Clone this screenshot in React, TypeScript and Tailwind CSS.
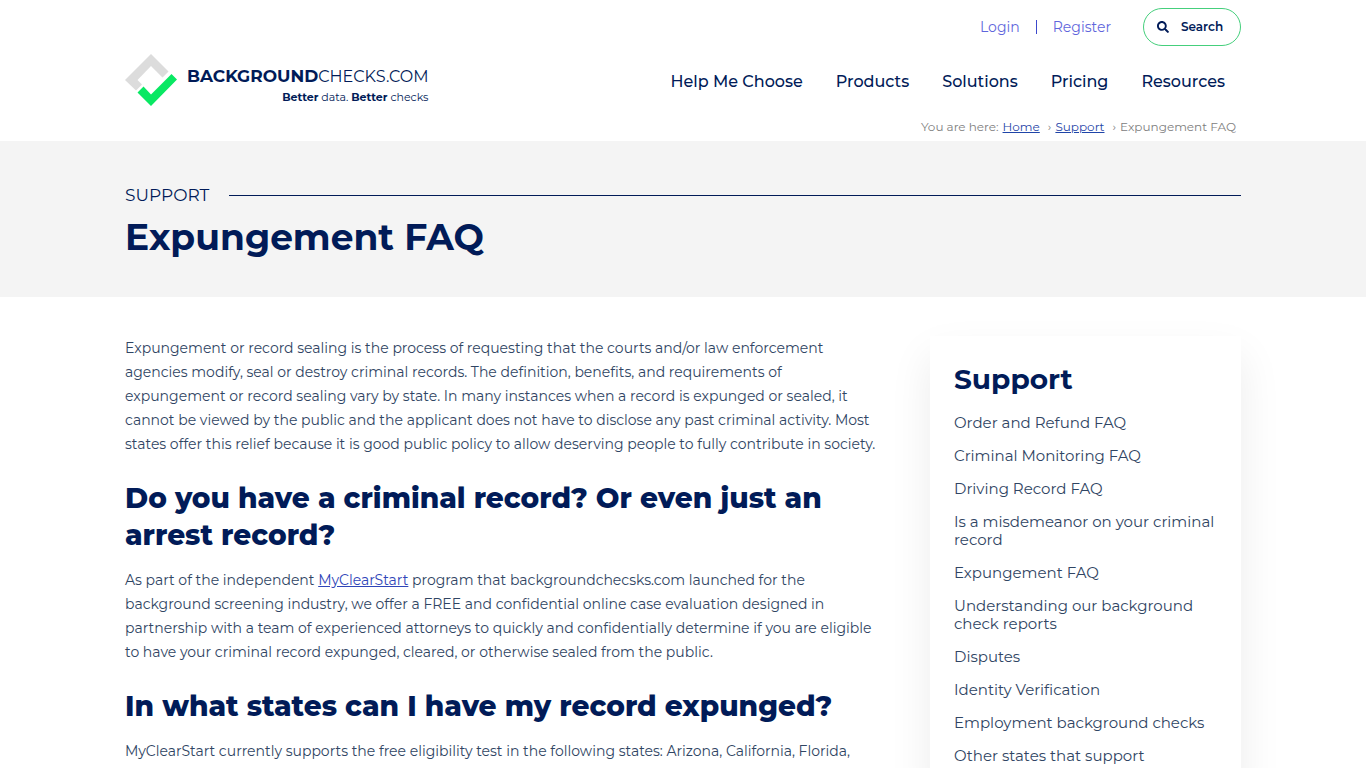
import React from "react";
import { FaSearch } from "react-icons/fa";

const nav = ["Help Me Choose", "Products", "Solutions", "Pricing", "Resources"];

const supportLinks = [
  "Order and Refund FAQ",
  "Criminal Monitoring FAQ",
  "Driving Record FAQ",
  "Is a misdemeanor on your criminal record",
  "Expungement FAQ",
  "Understanding our background check reports",
  "Disputes",
  "Identity Verification",
  "Employment background checks",
  "Other states that support",
];

function Logo() {
  return (
    <a href="#" className="flex items-center gap-2.5 text-[#011b58]" aria-label="BackgroundChecks.com home">
      <svg viewBox="0 0 52 52" className="h-[52px] w-[52px]" aria-hidden="true">
        <path d="M26 0 43.5 17.5 37.5 23.5 26 12 12.5 26 17 30.5 11 36.5 0 26Z" fill="#dcdcdc" />
        <path d="M46.5 20 52 25.5 26 52 12.5 38.5 18.5 32.5 26 40.5Z" fill="#09e863" />
      </svg>
      <span className="flex flex-col items-end pt-2.5">
        <span className="text-[17px] leading-[19px]">
          <b className="font-bold">BACKGROUND</b><span className="text-base">CHECKS.COM</span>
        </span>
        <span className="text-[11px] leading-4">
          <b className="font-bold">Better</b> data. <b className="font-bold">Better</b> checks
        </span>
      </span>
    </a>
  );
}

function Header() {
  return (
    <header className="mx-auto flex w-full max-w-[1116px] items-start justify-between">
      <div className="pt-[54px]">
        <Logo />
      </div>
      <div className="flex flex-col items-end pt-2">
        <div className="flex h-[38px] items-center text-sm text-[#5f66dc]">
          <a href="#" className="border-r border-[#3c49cc] pr-4 leading-[14px]">Login</a>
          <a href="#" className="pl-4 leading-[14px]">Register</a>
          <button
            type="button"
            className="ml-8 flex h-[38px] w-[98px] items-center gap-3 rounded-full border border-[#45cf7c] pl-[13px] text-xs font-semibold text-[#011b58]"
          >
            <FaSearch className="h-3 w-3" aria-hidden="true" />
            Search
          </button>
        </div>
        <nav className="flex gap-[33px] pt-6 pr-4 text-base leading-6 font-medium text-[#011b58]">
          {nav.map((item) => (
            <a key={item} href="#">{item}</a>
          ))}
        </nav>
        <nav aria-label="Breadcrumb" className="flex gap-1 pt-[23px] pr-[5px] pb-1 text-xs leading-5 text-[#808080]">
          <span>You are here:</span>
          <a href="#" className="text-[#1f45a8] underline">Home</a>
          <span className="pl-1">›</span>
          <a href="#" className="text-[#1f45a8] underline">Support</a>
          <span className="pl-1">›</span>
          <span>Expungement FAQ</span>
        </nav>
      </div>
    </header>
  );
}

export default function App() {
  return (
    <div className="min-h-screen bg-white font-['Montserrat','Inter',sans-serif] text-[#011b58]">
      <Header />
      <section className="bg-[#f4f4f4] pt-[42px] pb-9">
        <div className="mx-auto w-full max-w-[1116px]">
          <div className="flex items-center gap-5">
            <p className="text-[17px] leading-6">SUPPORT</p>
            <div className="h-px flex-1 bg-[#011b58]" />
          </div>
          <h1 className="pt-1.5 text-4xl leading-12 font-bold">Expungement FAQ</h1>
        </div>
      </section>
      <div className="mx-auto flex w-full max-w-[1116px] items-start justify-between gap-10 pt-[39px]">
        <main className="min-w-0 flex-1 text-sm leading-6 text-[#304563]">
          <p>
            Expungement or record sealing is the process of requesting that the courts and/or law enforcement<br />
            agencies modify, seal or destroy criminal records. The definition, benefits, and requirements of<br />
            expungement or record sealing vary by state. In many instances when a record is expunged or sealed, it<br />
            cannot be viewed by the public and the applicant does not have to disclose any past criminal activity. Most<br />
            states offer this relief because it is good public policy to allow deserving people to fully contribute in society.
          </p>
          <h2 className="pt-6 pb-3.5 text-[28px] leading-[37px] font-extrabold text-[#011b58]">
            Do you have a criminal record? Or even just an<br />
            arrest record?
          </h2>
          <p>
            As part of the independent <a href="#" className="text-[#2f45b8] underline">MyClearStart</a> program that backgroundchecsks.com launched for the<br />
            background screening industry, we offer a FREE and confidential online case evaluation designed in<br />
            partnership with a team of experienced attorneys to quickly and confidentially determine if you are eligible<br />
            to have your criminal record expunged, cleared, or otherwise sealed from the public.
          </p>
          <h2 className="pt-6 pb-3.5 text-[28px] leading-[37px] font-extrabold text-[#011b58]">
            In what states can I have my record expunged?
          </h2>
          <p>MyClearStart currently supports the free eligibility test in the following states: Arizona, California, Florida,</p>
        </main>
        <aside className="w-[311px] shrink-0 bg-white px-6 pt-[25px] pb-6 shadow-[0_20px_40px_rgba(0,0,0,0.08)]">
          <h2 className="pb-[17px] text-[28px] leading-9 font-bold">Support</h2>
          <ul className="flex flex-col gap-[15px] text-[15px] leading-[18px] text-[#304563]">
            {supportLinks.map((item) => (
              <li key={item}>
                <a href="#">{item}</a>
              </li>
            ))}
          </ul>
        </aside>
      </div>
    </div>
  );
}
